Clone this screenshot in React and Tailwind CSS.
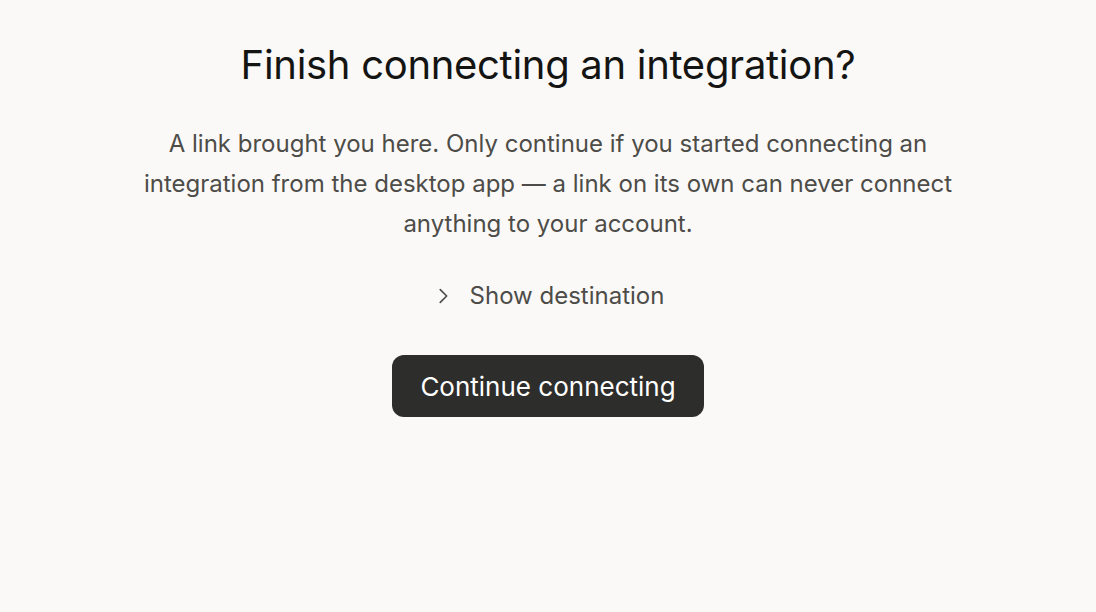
import React, { useState } from 'react';

function ChevronRight() {
  return (
    <svg width="22" height="22" viewBox="0 0 24 24" fill="none" stroke="currentColor" strokeWidth="1.8" strokeLinecap="round" strokeLinejoin="round">
      <path d="M9 5l7 7-7 7" />
    </svg>
  );
}

export default function App() {
  const [open, setOpen] = useState(false);

  return (
    <div
      className="min-h-[612px] w-full bg-[#faf9f7] flex flex-col items-center pt-[37px]"
      style={{ fontFamily: 'Inter, "Open Sans", sans-serif' }}
    >
      <h1 className="text-[40px] leading-[56px] text-[#141413] font-normal tracking-[-0.3px]">
        Finish connecting an integration?
      </h1>

      <p className="mt-[31px] max-w-[880px] text-center text-[24px] leading-[40px] text-[#4d4c48]">
        A link brought you here. Only continue if you started connecting an
        integration from the desktop app — a link on its own can never
        connect anything to your account.
      </p>

      <button
        onClick={() => setOpen(!open)}
        className="mt-[36px] flex items-center gap-[16px] text-[24px] leading-[32px] text-[#4d4c48]"
      >
        <span className={open ? 'rotate-90 transition-transform' : 'transition-transform'}>
          <ChevronRight />
        </span>
        Show destination
      </button>

      {open && (
        <div className="mt-3 text-[16px] text-[#6b6a65]">destination not set</div>
      )}

      <button className="mt-[43px] h-[62px] px-[28px] rounded-[12px] bg-[#2d2d2b] text-white text-[26px]">
        Continue connecting
      </button>
    </div>
  );
}
